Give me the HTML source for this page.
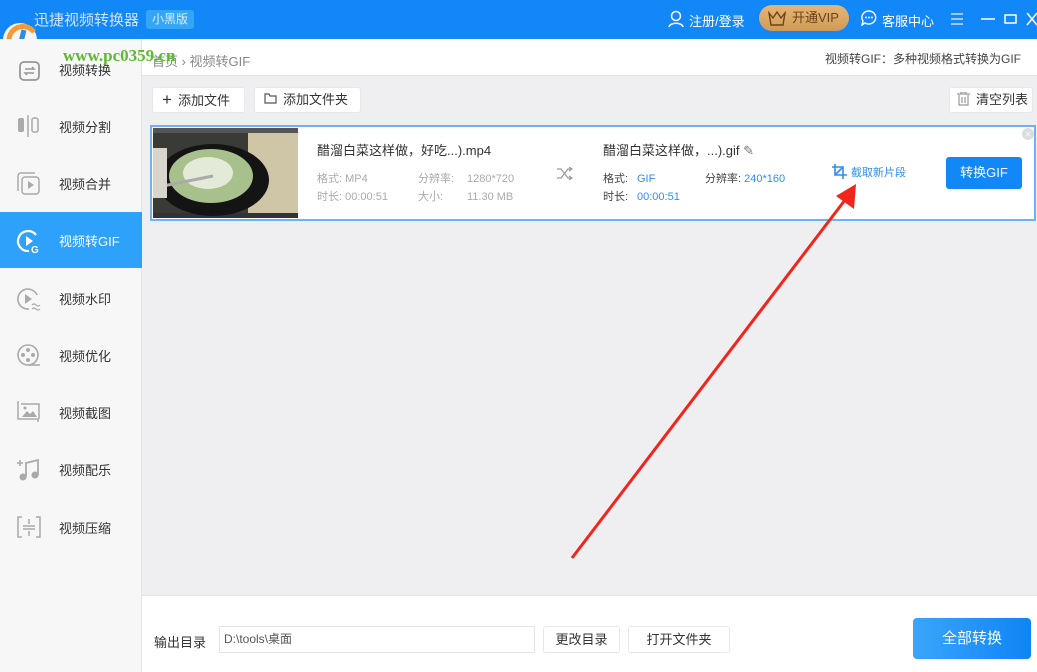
<!DOCTYPE html>
<html><head><meta charset="utf-8"><style>
*{margin:0;padding:0;box-sizing:border-box}
body{width:1037px;height:672px;position:relative;overflow:hidden;font-family:"Liberation Sans","Noto Sans CJK SC",sans-serif;background:#efeef0;color:#333}
.a{position:absolute}
.top{left:0;top:0;width:1037px;height:39px;background:#1287f7;color:#fff}
.side{left:0;top:39px;width:142px;height:633px;background:#f7f7f7;border-right:1px solid #e4e4e4}
.it{position:absolute;left:0;width:142px;height:56px;font-size:13px;color:#333}
.it span{position:absolute;left:59px;top:19px}
.it svg{position:absolute;left:16px;top:16px}
.btn{background:#fff;border-radius:3px;font-size:13px;color:#333;border:1px solid #e8e8e8}
</style></head><body>
<div class="a top">
 <div class="a" style="left:34px;top:9px;font-size:15px;color:#cfe4fb">迅捷视频转换器</div>
 <div class="a" style="left:146px;top:10px;width:48px;height:19px;background:#35a6f6;border-radius:3px;font-size:12px;text-align:center;line-height:19px;color:#d8ecff">小黑版</div>
 <svg class="a" style="left:668px;top:10px" width="16" height="18"><circle cx="8" cy="6" r="4.5" fill="none" stroke="#fff" stroke-width="1.5"/><path d="M1 17c1-5 13-5 14 0" fill="none" stroke="#fff" stroke-width="1.5"/></svg>
 <div class="a" style="left:689px;top:11px;font-size:13px">注册/登录</div>
 <div class="a" style="left:759px;top:5px;width:90px;height:26px;border-radius:13px;background:linear-gradient(#e6b678,#cf9a55);color:#6b4415;font-size:13px;line-height:26px;padding-left:33px">开通VIP</div>
 <svg class="a" style="left:768px;top:11px" width="18" height="15"><path d="M1 2l4 5 4-6 4 6 4-5-2 12H3z" fill="none" stroke="#6b4415" stroke-width="1.4"/></svg>
 <svg class="a" style="left:861px;top:10px" width="16" height="16"><path d="M8 1a7 6.5 0 1 1-4 12l-3 2 1-4A7 6.5 0 0 1 8 1z" fill="none" stroke="#fff" stroke-width="1.4"/><circle cx="5" cy="7.5" r="1" fill="#fff"/><circle cx="8" cy="7.5" r="1" fill="#fff"/><circle cx="11" cy="7.5" r="1" fill="#fff"/></svg>
 <div class="a" style="left:882px;top:11px;font-size:13px">客服中心</div>
 <svg class="a" style="left:950px;top:12px" width="14" height="14"><path d="M1 2h12M1 7h12M1 12h12" stroke="#cde" stroke-width="1.4"/></svg>
 <svg class="a" style="left:980px;top:12px" width="57" height="14"><path d="M1 7h14" stroke="#fff" stroke-width="1.5"/><rect x="25" y="3" width="11" height="8" fill="none" stroke="#fff" stroke-width="1.5"/><path d="M47 1l10 12M57 1L47 13" stroke="#fff" stroke-width="1.5"/></svg>
</div>
<svg class="a" style="left:2px;top:22px" width="54" height="36"><circle cx="18" cy="18" r="17" fill="#f4f4f4"/><path d="M8 24A14 14 0 0 1 32 10" fill="none" stroke="#f29a38" stroke-width="5"/><path d="M22 8l-6 24" stroke="#2e8be6" stroke-width="5"/></svg>
<div class="a" style="left:63px;top:46px;font-family:'Liberation Serif',serif;font-weight:bold;font-size:17px;color:#5bbb2f;z-index:3">www.pc0359.cn</div>
<div class="a" style="left:142px;top:39px;width:895px;height:37px;background:#fff;border-bottom:1px solid #e4e4e4"></div>
<div class="a" style="left:152px;top:51px;font-size:13px;color:#888">首页 › 视频转GIF</div>
<div class="a" style="right:16px;top:50px;font-size:12px;color:#444">视频转GIF：多种视频格式转换为GIF</div>
<div class="a side">
 <div class="it" style="top:2px"><svg width="26" height="26"><rect x="4" y="5" width="19" height="18" rx="4" fill="none" stroke="#999" stroke-width="1.8"/><path d="M9 12h9l-2-2M18 16H9l2 2" fill="none" stroke="#999" stroke-width="1.5"/></svg><span>视频转换</span></div>
 <div class="it" style="top:59px"><svg width="26" height="26"><rect x="2" y="4" width="6" height="14" rx="2" fill="#aaa"/><path d="M12 1v22" stroke="#aaa" stroke-width="1.5"/><rect x="16" y="4" width="6" height="14" rx="2" fill="none" stroke="#aaa" stroke-width="1.5"/></svg><span>视频分割</span></div>
 <div class="it" style="top:116px"><svg width="26" height="26"><path d="M2 20V5a3 3 0 0 1 3-3h14" fill="none" stroke="#aaa" stroke-width="1.5"/><rect x="6" y="6" width="17" height="17" rx="3" fill="none" stroke="#aaa" stroke-width="1.5"/><path d="M12 10l6 4-6 4z" fill="#aaa"/></svg><span>视频合并</span></div>
 <div class="it" style="top:173px;background:#2ea1fb;color:#fff"><svg width="26" height="26"><path d="M20 7A10 10 0 1 0 13 23" fill="none" stroke="#fff" stroke-width="2.2"/><path d="M10 8l7 5-7 5z" fill="#fff"/><text x="15" y="25" font-size="10" font-weight="bold" fill="#fff" font-family="Liberation Sans">G</text></svg><span>视频转GIF</span></div>
 <div class="it" style="top:231px"><svg width="26" height="26"><path d="M21 9A10 10 0 1 0 13 23" fill="none" stroke="#aaa" stroke-width="1.6"/><path d="M9 8l7 5-7 5z" fill="#aaa"/><path d="M16 19q2-2 4 0t4 0M16 23q2-2 4 0t4 0" fill="none" stroke="#aaa" stroke-width="1.2"/></svg><span>视频水印</span></div>
 <div class="it" style="top:288px"><svg width="26" height="26"><circle cx="12" cy="12" r="10" fill="none" stroke="#aaa" stroke-width="1.6"/><circle cx="12" cy="7" r="2" fill="#aaa"/><circle cx="7" cy="12" r="2" fill="#aaa"/><circle cx="17" cy="12" r="2" fill="#aaa"/><circle cx="12" cy="17" r="2" fill="#aaa"/><path d="M12 22h12" stroke="#aaa" stroke-width="1.6"/></svg><span>视频优化</span></div>
 <div class="it" style="top:345px"><svg width="26" height="26"><path d="M2 1v18h20v3M5 4h18v15" fill="none" stroke="#aaa" stroke-width="1.5"/><path d="M6 17l5-6 3 3 3-3 4 6z" fill="#aaa"/><circle cx="9" cy="8" r="1.5" fill="#aaa"/></svg><span>视频截图</span></div>
 <div class="it" style="top:402px"><svg width="26" height="26"><path d="M1 6h6M4 3v6" stroke="#aaa" stroke-width="1.5"/><path d="M10 20V6l12-3v15" fill="none" stroke="#aaa" stroke-width="1.8"/><circle cx="7" cy="20" r="3.5" fill="#aaa"/><circle cx="19" cy="18" r="3.5" fill="#aaa"/></svg><span>视频配乐</span></div>
 <div class="it" style="top:460px"><svg width="26" height="26"><path d="M6 2H2v20h4M20 2h4v20h-4" fill="none" stroke="#aaa" stroke-width="1.5"/><path d="M7 11h12M7 14h12M13 4v5M13 16v5" stroke="#aaa" stroke-width="1.5"/></svg><span>视频压缩</span></div>
</div>
<div class="a btn" style="left:152px;top:87px;width:93px;height:26px;line-height:24px;padding-left:9px"><span style="font-size:17px;margin-right:6px">+</span>添加文件</div>
<div class="a btn" style="left:254px;top:87px;width:107px;height:26px;line-height:24px;padding-left:9px"><svg width="13" height="11" style="margin-right:6px"><path d="M1 1h4l1 2h6v7H1z" fill="none" stroke="#555" stroke-width="1.2"/></svg>添加文件夹</div>
<div class="a btn" style="left:949px;top:87px;width:84px;height:26px;line-height:24px;padding-left:7px"><svg width="13" height="14" style="margin-right:6px;vertical-align:-2px"><path d="M0 2h13M4 2V0h5v2M2 3v10h9V3M5 5v6M8 5v6" fill="none" stroke="#999" stroke-width="1.2"/></svg>清空列表</div>
<div class="a" style="left:150px;top:125px;width:886px;height:96px;background:#fff;border:2px solid #6cb3f3"></div>
<svg class="a" style="left:153px;top:128px" width="145" height="90"><rect width="145" height="90" fill="#3a3a36"/><rect x="0" y="0" width="145" height="5" fill="#555"/><rect x="95" y="5" width="50" height="80" fill="#cfc6a8"/><rect x="0" y="85" width="145" height="5" fill="#333"/><ellipse cx="60" cy="52" rx="56" ry="36" fill="#141414"/><ellipse cx="58" cy="48" rx="42" ry="27" fill="#a7c08c"/><ellipse cx="55" cy="45" rx="25" ry="16" fill="#e3ead8"/><path d="M10 58l50-10" stroke="#aaa" stroke-width="3"/><rect x="0" y="20" width="14" height="50" fill="#d8d5cc"/></svg>
<div class="a" style="left:317px;top:140px;font-size:13px;color:#333">醋溜白菜这样做，好吃...).mp4</div>
<div class="a" style="left:317px;top:170px;font-size:11px;color:#aaa;line-height:18px">格式: MP4<br>时长: 00:00:51</div>
<div class="a" style="left:418px;top:170px;font-size:11px;color:#aaa;line-height:18px">分辨率:<br>大小:</div>
<div class="a" style="left:467px;top:170px;font-size:11px;color:#aaa;line-height:18px">1280*720<br>11.30 MB</div>
<svg class="a" style="left:557px;top:167px" width="16" height="13"><path d="M0 2h4l7 9h4M0 11h4l7-9h4M12 0l3 2-3 2M12 9l3 2-3 2" fill="none" stroke="#999" stroke-width="1.2"/></svg>
<div class="a" style="left:603px;top:140px;font-size:13px;color:#333">醋溜白菜这样做，...).gif <span style="color:#777">✎</span></div>
<div class="a" style="left:603px;top:170px;font-size:11px;color:#444;line-height:18px">格式:<br>时长:</div>
<div class="a" style="left:637px;top:170px;font-size:11px;color:#2e8ff0;line-height:18px">GIF<br>00:00:51</div>
<div class="a" style="left:705px;top:170px;font-size:11px;color:#444">分辨率: <span style="color:#2e8ff0">240*160</span></div>
<svg class="a" style="left:832px;top:164px" width="15" height="15"><path d="M3 0v11h12M0 3h11v12M3 11L11 3" fill="none" stroke="#2e8ff0" stroke-width="1.6"/></svg>
<div class="a" style="left:851px;top:164px;font-size:11px;color:#2e8ff0">截取新片段</div>
<div class="a" style="left:946px;top:157px;width:76px;height:32px;background:#1287f7;border-radius:3px;color:#fff;font-size:13px;text-align:center;line-height:32px">转换GIF</div>
<div class="a" style="left:1022px;top:128px;width:12px;height:12px;border-radius:6px;background:#ddd;color:#fff;font-size:9px;text-align:center;line-height:12px">×</div>
<svg class="a" style="left:0;top:0" width="1037" height="672"><line x1="572" y1="558" x2="845" y2="200" stroke="#f2241b" stroke-width="3"/><path d="M856 184l-2 25-18-13z" fill="#f2241b"/></svg>
<div class="a" style="left:142px;top:595px;width:895px;height:77px;background:#fff;border-top:1px solid #e4e4e4"></div>
<div class="a" style="left:154px;top:632px;font-size:13px;color:#333">输出目录</div>
<div class="a" style="left:219px;top:626px;width:316px;height:27px;border:1px solid #e4e4e4;font-size:12px;color:#555;line-height:25px;padding-left:4px">D:\tools\桌面</div>
<div class="a btn" style="left:543px;top:626px;width:77px;height:27px;line-height:25px;text-align:center">更改目录</div>
<div class="a btn" style="left:628px;top:626px;width:102px;height:27px;line-height:25px;text-align:center">打开文件夹</div>
<div class="a" style="left:913px;top:618px;width:118px;height:41px;border-radius:4px;background:linear-gradient(90deg,#3aa5fb,#0f84f6);color:#fff;font-size:15px;text-align:center;line-height:41px">全部转换</div>
</body></html>
